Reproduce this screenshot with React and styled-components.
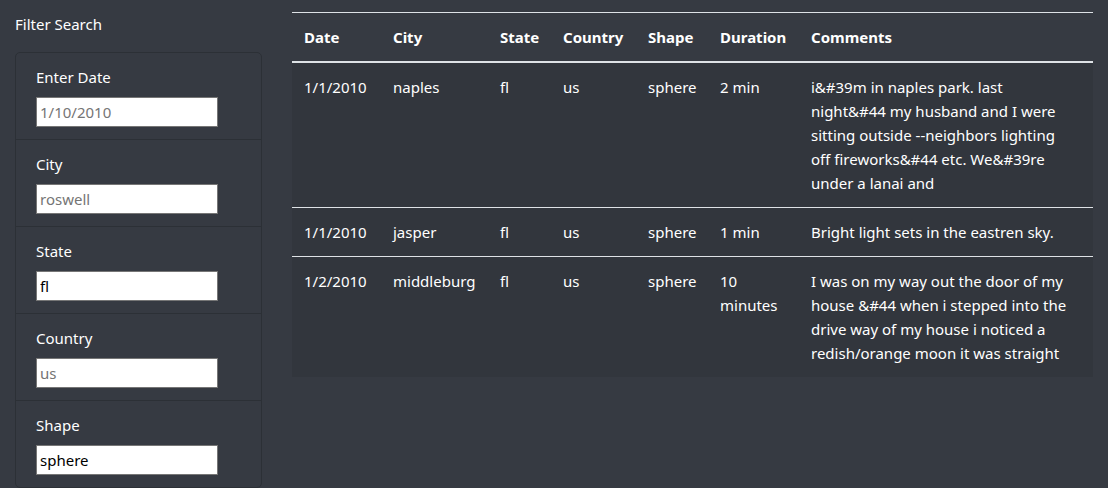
import React from "react";
import styled, { createGlobalStyle } from "styled-components";

const GlobalStyle = createGlobalStyle`
  body {
    margin: 0;
    background-color: #363a42;
    color: #ffffff;
    font-family: "Noto Sans", "Open Sans", sans-serif;
    font-size: 15px;
    line-height: 24px;
  }
`;

// two columns: filters on the left, results on the right
const Layout = styled.div`
  display: flex;
  width: 100%;
`;

const Sidebar = styled.aside`
  width: 25%;
  padding: 0 15px;
  box-sizing: border-box;
`;

const Title = styled.div`
  padding-top: 12px;
  margin-bottom: 16px;
  line-height: 24px;
`;

const FilterList = styled.ul`
  list-style: none;
  margin: 0;
  padding: 0;
  border: 1px solid #2c3036;
  border-radius: 5px;
`;

const FilterItem = styled.li`
  padding: 12px 20px;
  & + & {
    border-top: 1px solid #2c3036;
  }
`;

const Label = styled.label`
  display: block;
  margin-bottom: 8px;
  line-height: 24px;
`;

const Input = styled.input`
  display: block;
  box-sizing: border-box;
  width: 182px;
  height: 30px;
  padding: 1px 3px;
  border: 1px solid #767676;
  background: #ffffff;
  color: #000000;
  font-family: inherit;
  font-size: 15px;
  outline: none;

  &::placeholder {
    color: #757575;
  }
`;

const Main = styled.main`
  width: 75%;
  padding: 12px 15px 0;
  box-sizing: border-box;
`;

const Table = styled.table`
  width: 100%;
  border-collapse: collapse;
  table-layout: fixed;
`;

const Head = styled.th`
  padding: 12px;
  text-align: left;
  font-weight: 700;
  line-height: 24px;
  border-top: 1px solid #dee2e6;
  border-bottom: 2px solid #dee2e6;
`;

const Body = styled.tbody`
  background-color: #32363d;
`;

const Cell = styled.td`
  padding: 12px;
  padding-right: ${(p) => (p.$wide ? "16px" : "12px")};
  vertical-align: top;
  line-height: 24px;
  border-top: 1px solid #dee2e6;
`;

const filters = [
  { id: "datetime", label: "Enter Date", placeholder: "1/10/2010" },
  { id: "city", label: "City", placeholder: "roswell" },
  { id: "state", label: "State", value: "fl" },
  { id: "country", label: "Country", placeholder: "us" },
  { id: "shape", label: "Shape", value: "sphere" },
];

const columns = [
  { name: "Date", width: 89 },
  { name: "City", width: 107 },
  { name: "State", width: 63 },
  { name: "Country", width: 85 },
  { name: "Shape", width: 72 },
  { name: "Duration", width: 91 },
  { name: "Comments" },
];

const sightings = [
  {
    date: "1/1/2010",
    city: "naples",
    state: "fl",
    country: "us",
    shape: "sphere",
    duration: "2 min",
    comments:
      "i&#39m in naples park. last night&#44 my husband and I were sitting outside --neighbors lighting off fireworks&#44 etc. We&#39re under a lanai and",
  },
  {
    date: "1/1/2010",
    city: "jasper",
    state: "fl",
    country: "us",
    shape: "sphere",
    duration: "1 min",
    comments: "Bright light sets in the eastren sky.",
  },
  {
    date: "1/2/2010",
    city: "middleburg",
    state: "fl",
    country: "us",
    shape: "sphere",
    duration: "10 minutes",
    comments:
      "I was on my way out the door of my house &#44 when i stepped into the drive way of my house i noticed a redish/orange moon it was straight",
  },
];

const App = () => {
  return (
    <>
      <GlobalStyle />
      <Layout>
        <Sidebar>
          <Title>Filter Search</Title>
          <FilterList>
            {filters.map((f) => (
              <FilterItem key={f.id}>
                <Label htmlFor={f.id}>{f.label}</Label>
                <Input
                  id={f.id}
                  type="text"
                  placeholder={f.placeholder}
                  defaultValue={f.value}
                />
              </FilterItem>
            ))}
          </FilterList>
        </Sidebar>
        <Main>
          <Table>
            <colgroup>
              {columns.map((c) => (
                <col key={c.name} style={c.width ? { width: c.width } : undefined} />
              ))}
            </colgroup>
            <thead>
              <tr>
                {columns.map((c) => (
                  <Head key={c.name}>{c.name}</Head>
                ))}
              </tr>
            </thead>
            <Body>
              {sightings.map((s, i) => (
                <tr key={i}>
                  <Cell>{s.date}</Cell>
                  <Cell>{s.city}</Cell>
                  <Cell>{s.state}</Cell>
                  <Cell>{s.country}</Cell>
                  <Cell>{s.shape}</Cell>
                  <Cell>{s.duration}</Cell>
                  <Cell $wide>{s.comments}</Cell>
                </tr>
              ))}
            </Body>
          </Table>
        </Main>
      </Layout>
    </>
  );
};

export default App;
